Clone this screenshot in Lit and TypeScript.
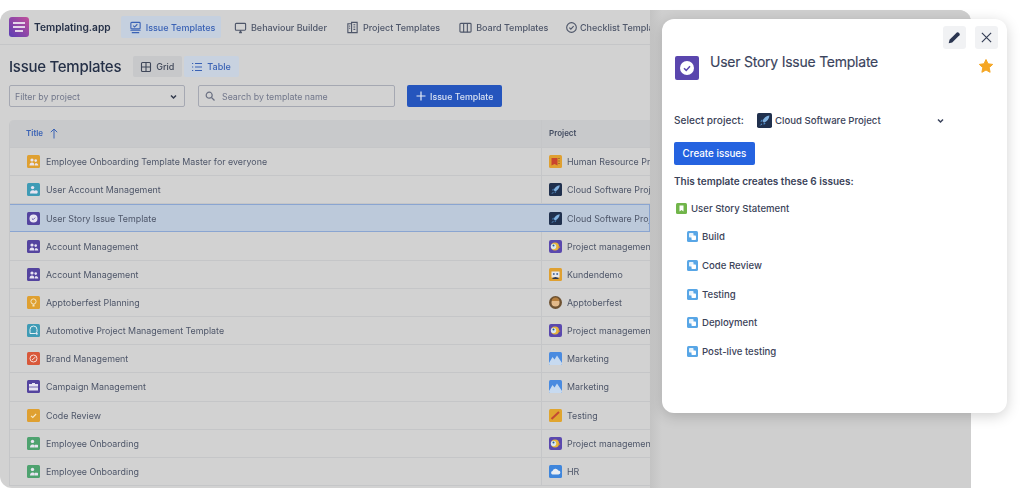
import { LitElement, html, css, svg } from "lit";
import { customElement } from "lit/decorators.js";

const tIcon = (kind: string) => {
  const colors: Record<string, string> = {
    orange: "#dfa031", teal: "#3f9bb5", purple: "#54449f", red: "#d8583a", green: "#4ea26f",
  };
  const map: Record<string, [string, any]> = {
    people: ["orange", svg`<circle cx="5" cy="5" r="1.6"/><circle cx="8.7" cy="5.6" r="1.3"/><path d="M2.5 10.5c0-2 1-3 2.5-3s2.5 1 2.5 3zM8 10.5c0-1.500 0-2 .7-2.600 1.300 0 2.600.8 2.600 2.600z"/>`],
    peopleTeal: ["teal", svg`<circle cx="5.600" cy="4.600" r="1.700"/><path d="M3 10.500c0-2 1-3.200 2.600-3.200S8 8 8 8.500V10.500z"/><circle cx="9" cy="9" r="1.800"/>`],
    story: ["purple", svg`<circle cx="6.500" cy="6.500" r="4"/><path d="M4.900 6.500l1.200 1.200 2-2" fill="none" stroke="#54449f" stroke-width=".9"/>`],
    peoplePurple: ["purple", svg`<circle cx="5" cy="5" r="1.600"/><circle cx="8.700" cy="5.600" r="1.300"/><path d="M2.500 10.500c0-2 1-3 2.500-3s2.500 1 2.500 3zM8 10.500c0-1.500 0-2 .7-2.600 1.300 0 2.600.8 2.600 2.600z"/>`],
    bulb: ["orange", svg`<circle cx="6.500" cy="5.500" r="2.600" fill="none" stroke="#f4e6c4" stroke-width="1"/><path d="M5.500 8.500h2v2h-2z" fill="#f4e6c4"/>`],
    chat: ["teal", svg`<path d="M3 9.500V5.500a3.500 3.500 0 0 1 7 0v2a2 2 0 0 1-2 2z" fill="none" stroke="#e4f0f4" stroke-width="1"/><circle cx="9.800" cy="9.800" r="1"/>`],
    target: ["red", svg`<circle cx="6.500" cy="6.500" r="3.500" fill="none" stroke="#f7dfd8" stroke-width="1"/><path d="M5 8l3.500-3" stroke="#f7dfd8" stroke-width="1"/>`],
    case: ["purple", svg`<path d="M5 4V3h3v1h3v6.500H2V4z"/><path d="M2 7h9" stroke="#54449f" stroke-width=".8"/>`],
    tick: ["orange", svg`<path d="M4 6.800l1.800 1.700 3.300-3.500" fill="none" stroke="#f7e8c6" stroke-width="1.100"/>`],
    board: ["green", svg`<circle cx="5.500" cy="4.400" r="1.700"/><path d="M3 10.500c0-2 1-3 2.500-3 1 0 1.500.3 2 1v2z"/><rect x="7.500" y="7.800" width="3.500" height="2.700" rx=".6"/>`],
  };
  const [c, body] = map[kind];
  return html`<svg class="ti" viewBox="0 0 13 13" fill="#e8e4f2"><rect width="13" height="13" rx="1.500" fill=${colors[c]}/>${body}</svg>`;
};

const pIcon = (kind: string) => {
  const map: Record<string, any> = {
    book: svg`<rect width="13" height="13" rx="1.500" fill="#dfa031"/><path d="M2.500 3h6v7.500l-3-1.500-3 1.500z" fill="#c9452f"/><path d="M9.500 3.500h1M9.500 6h1M9.500 8.500h1" stroke="#7a4a25" stroke-width="1"/>`,
    rocket: svg`<rect width="13" height="13" rx="1.500" fill="#20304d"/><path d="M10.800 2.200C8 2.500 5.800 4.300 4.700 7l1.400 1.400c2.600-1 4.400-3.200 4.700-6.200z" fill="#7fb0de"/><path d="M4.500 5.500L2.800 7.300l1.700.2zM7.600 8.600L5.900 10.300 5.700 8.700z" fill="#4d8cc9"/><path d="M4.300 8.800L2.200 11l2.300-1z" fill="#5d9ad4"/>`,
    bird: svg`<rect width="13" height="13" rx="2" fill="#5a48ae"/><circle cx="6" cy="6.500" r="4" fill="#e7b53c"/><circle cx="4.500" cy="6.500" r="2.700" fill="#d9e6ef"/><circle cx="4.500" cy="5.500" r="1" fill="#2b5d8a"/><path d="M9.500 6l2 1-2 1.500z" fill="#d98a2b"/>`,
    cat: svg`<rect width="13" height="13" rx="1.500" fill="#dfa031"/><rect x="2.500" y="3.500" width="8" height="6" fill="#e6e8ee"/><circle cx="4.800" cy="6" r="1" fill="#4a6a9a"/><circle cx="8.200" cy="6" r="1" fill="#4a6a9a"/><path d="M3.500 10l3-1 3 1v1h-6z" fill="#2c3a57"/>`,
    face: svg`<circle cx="6.500" cy="6.500" r="6.500" fill="#6e5232"/><circle cx="6.500" cy="6.500" r="4" fill="#e2b98a"/><path d="M3 5a3.500 3.500 0 0 1 7 0z" fill="#b67f3e"/>`,
    mountain: svg`<rect width="13" height="13" rx="1.500" fill="#4a8be0"/><path d="M0 11l3.500-6 2 2.500L8 3.500 13 11v.5a1.500 1.500 0 0 1-1.500 1.500h-10A1.500 1.500 0 0 1 0 11.500z" fill="#c7daf0"/>`,
    saw: svg`<rect width="13" height="13" rx="1.500" fill="#e0a52f"/><path d="M2.500 10L10 3" stroke="#c44a34" stroke-width="2"/>`,
    cloud: svg`<rect width="13" height="13" rx="1.500" fill="#3f86dc"/><path d="M3.500 9.500a1.800 1.800 0 0 1 0-3.500 3 3 0 0 1 5.700-.5 2 2 0 0 1 .3 4z" fill="#e9eef4"/>`,
  };
  return html`<svg class="ti" viewBox="0 0 13 13">${map[kind]}</svg>`;
};

const rows: [string, string, string, string][] = [
  ["people", "Employee Onboarding Template Master for everyone", "book", "Human Resource Project"],
  ["peopleTeal", "User Account Management", "rocket", "Cloud Software Project"],
  ["story", "User Story Issue Template", "rocket", "Cloud Software Project"],
  ["peoplePurple", "Account Management", "bird", "Project management"],
  ["peoplePurple", "Account Management", "cat", "Kundendemo"],
  ["bulb", "Apptoberfest Planning", "face", "Apptoberfest"],
  ["chat", "Automotive Project Management Template", "bird", "Project management"],
  ["target", "Brand Management", "mountain", "Marketing"],
  ["case", "Campaign Management", "mountain", "Marketing"],
  ["tick", "Code Review", "saw", "Testing"],
  ["board", "Employee Onboarding", "bird", "Project management"],
  ["board", "Employee Onboarding", "cloud", "HR"],
];

const subtasks = ["Build", "Code Review", "Testing", "Deployment", "Post-live testing"];

const subIcon = html`<svg class="iss" viewBox="0 0 11 11"><rect width="11" height="11" rx="1.500" fill="#58a6e6"/><rect x="2" y="2" width="4.500" height="4.500" rx=".8" fill="#e8f3fc"/><rect x="4.500" y="4.500" width="4.500" height="4.500" rx=".8" fill="#fff"/></svg>`;

@customElement("app-root")
export class AppRoot extends LitElement {
  static styles = css`
    :host { display: block; width: 1024px; height: 488px; overflow: hidden; background: #fff; position: relative;
      font-family: Inter, "Liberation Sans", sans-serif; }
    .window { position: absolute; top: 10px; left: 0; width: 971px; height: 478px; background: #d2d2d2;
      border-radius: 12px 12px 0 12px; overflow: hidden; display: flex; }
    .main { width: 650px; flex: none; overflow: hidden; filter: blur(.4px); }
    .rest { flex: 1; background: linear-gradient(90deg, #c3c3c3, #cccccc 9px, #cfcfcf 12px); }
    nav { height: 35px; box-sizing: border-box; border-bottom: 1px solid #c5c6c8; display: flex; align-items: center;
      padding: 0 0 0 9px; white-space: nowrap; color: #4e5669; font-size: 9px; font-weight: 500; }
    .logo { width: 20px; height: 20px; flex: none; }
    .brand { font-size: 10.200px; font-weight: 600; color: #253047; margin-left: 5px; margin-right: 10px; }
    .tab { display: flex; align-items: center; gap: 4px; height: 22px; padding: 0 9.500px; border-radius: 2px; flex: none; }
    .tab svg { width: 13px; height: 13px; flex: none; fill: none; stroke: currentColor; stroke-width: 1.200; }
    .tab.on { background: #c5d0df; color: #3a62b5; margin-right: 3px; padding: 0 6px 0 8px; }
    .tab.last { padding-left: 7px; padding-right: 0; gap: 2px; }
    .headline { display: flex; align-items: center; height: 21px; margin: 11px 0 0 9px; }
    h1 { margin: 0 12px 0 0; font-size: 15px; letter-spacing: -.27px; line-height: 21px; font-weight: 500; color: #253047; white-space: nowrap; }
    .seg { display: flex; align-items: center; gap: 4px; height: 21px; padding: 0 8px 0 7px; border-radius: 2px; font-size: 9px;
      font-weight: 500; background: #c7c8ca; color: #3f4759; margin-right: 2px; }
    .seg svg { width: 12px; height: 12px; fill: none; stroke: currentColor; stroke-width: 1.100; }
    .seg.on { background: #c8d2e0; color: #3a62b5; }
    .filters { display: flex; align-items: center; height: 22px; margin: 8px 0 0 9px; font-size: 8.800px; color: #70768a; font-weight: 400; }
    .input { height: 22px; box-sizing: border-box; border: 1px solid #a5a8b2; border-radius: 2px; display: flex; align-items: center; padding: 0 6px 0 5px; }
    .sel { width: 176px; justify-content: space-between; margin-right: 13px; }
    .search { width: 197px; margin-right: 12px; gap: 7px; padding-left: 6px; }
    .chev { width: 9px; height: 9px; fill: none; stroke: #333b4e; stroke-width: 1.500; flex: none; }
    .search svg { width: 10px; height: 10px; fill: none; stroke: #6a7082; stroke-width: 1.200; flex: none; }
    .add { height: 22px; width: 95px; box-sizing: border-box; background: #2555bd; color: #d9e2f2; border-radius: 2px; display: flex; align-items: center;
      gap: 4px; padding-left: 9px; font-weight: 500; white-space: nowrap; }
    .add svg { width: 10px; height: 10px; stroke: #e5ebf6; stroke-width: 1.200; fill: none; flex: none; }
    .table { margin: 12.700px 0 0 9px; border-left: 1px solid #c5c6c8; border-top-left-radius: 5px; overflow: hidden; }
    .tr { display: grid; grid-template-columns: 531px 1fr; height: 28.200px; box-sizing: border-box; border-bottom: 1px solid #c5c6c8; font-size: 8.900px; color: #4e5669; }
    .td { display: flex; align-items: center; white-space: nowrap; overflow: hidden; min-width: 0; }
    .td:first-child { padding-left: 17px; gap: 6px; }
    .td + .td { border-left: 1px solid #c5c6c8; padding-left: 7px; gap: 5px; }
    .th { background: #c8c9cb; font-size: 8px; font-weight: 600; color: #414a5f; }
    .th .td:first-child { padding-left: 16px; gap: 6px; color: #3a62b5; }
    .th svg { width: 10px; height: 11px; fill: none; stroke: #3a62b5; stroke-width: 1; }
    .sel-row { background: #bcc9da; border: 1px solid #8aa5d1; margin-left: -1px; }
    .sel-row .td + .td { border-left-color: #bcc9da; }
    .ti { width: 13px; height: 13px; flex: none; }

    .panel { position: absolute; left: 662px; top: 19px; width: 345px; height: 394px; box-sizing: border-box; background: #fff; border-radius: 12px;
      box-shadow: 0 3px 14px rgba(0, 0, 0, .18); padding: 7px 9px 0 12px; color: #3b4359; font-size: 10px; }
    .actions { display: flex; justify-content: flex-end; gap: 9px; height: 23px; }
    .act { width: 23px; height: 23px; background: #f1f2f4; border-radius: 3px; display: flex; align-items: center; justify-content: center; }
    .act svg { width: 15px; height: 15px; }
    .head { display: flex; margin-top: 7px; height: 35px; padding-right: 4px; }
    .big { width: 24px; height: 24px; flex: none; margin: 0 11px 0 1px; }
    .title { flex: 1; font-size: 14px; letter-spacing: -.24px; font-weight: 400; line-height: 20px; color: #3a435c; margin-top: -4px; white-space: nowrap; -webkit-text-stroke: .15px #3a435c; }
    .star { width: 16px; height: 16px; margin-top: 2px; flex: none; }
    .proj { display: flex; align-items: center; height: 16px; margin-top: 21px; font-weight: 500; font-size: 9.600px; white-space: nowrap; }
    .proj .lab { width: 83px; font-size: 10.100px; }
    .proj .ti { width: 15px; height: 15px; margin-right: 3px; }
    .proj .name { width: 161px; }
    .proj .chev { stroke: #3a435c; }
    .create { display: inline-flex; align-items: center; justify-content: center; width: 81px; height: 23px; background: #2563e0; color: #fff; border-radius: 2px; margin-top: 14px;
      font-size: 9.800px; font-weight: 500; box-sizing: border-box; }
    .note { font-weight: 600; font-size: 10px; line-height: 14px; margin-top: 9px; height: 14px; white-space: nowrap; }
    ul { list-style: none; margin: 6px 0 0 2px; padding: 0; display: flex; flex-direction: column; font-weight: 500; font-size: 9.600px; }
    li { height: 28.600px; display: flex; align-items: center; gap: 4px; }
    li.sub { padding-left: 11px; }
    .iss { width: 11px; height: 11px; flex: none; }
  `;

  render() {
    return html`
      <div class="window">
        <div class="main">
          <nav>
            <svg class="logo" viewBox="0 0 20 20">
              <defs><linearGradient id="lg" x1="0" y1="1" x2="1" y2="0"><stop offset="0" stop-color="#5a3db5"/><stop offset="1" stop-color="#c2509a"/></linearGradient></defs>
              <rect width="20" height="20" rx="3" fill="url(#lg)"/>
              <path d="M4 5h12v2H4zM4 9h12v2H4zM6 13h8v2H6z" fill="#e4d6ea"/>
            </svg>
            <span class="brand">Templating.app</span>
            <div class="tab on">
              <svg viewBox="0 0 14 14"><rect x="2" y="1.500" width="10" height="7" rx="1"/><path d="M4.500 5l1.500 1.500 3-3M1.500 10h11M3 12.500h8"/></svg>
              Issue Templates
            </div>
            <div class="tab">
              <svg viewBox="0 0 14 14"><rect x="1.500" y="2.500" width="11" height="7.500" rx="1"/><path d="M7 10v2.500M5.500 12.500h3" stroke-width="1.600"/></svg>
              Behaviour Builder
            </div>
            <div class="tab">
              <svg viewBox="0 0 14 14"><path d="M2 3h4v9.500H2zM6 1.500h6v11H6zM3.500 5.500h1M3.500 8h1M8 4h2M8 6.500h2M8 9h2"/></svg>
              Project Templates
            </div>
            <div class="tab">
              <svg viewBox="0 0 14 14"><rect x="1" y="2.500" width="12" height="9.500" rx="1"/><path d="M5 2.500V12M9 2.500V12"/></svg>
              Board Templates
            </div>
            <div class="tab last">
              <svg viewBox="0 0 14 14"><circle cx="7" cy="7" r="5.200"/><path d="M4.700 7.200l1.600 1.600 3-3.200"/></svg>
              Checklist Templates
            </div>
          </nav>
          <div class="headline">
            <h1>Issue Templates</h1>
            <div class="seg">
              <svg viewBox="0 0 12 12"><rect x="1.500" y="1.500" width="9" height="9" rx="1"/><path d="M6 1.500v9M1.500 6h9"/></svg>
              Grid
            </div>
            <div class="seg on">
              <svg viewBox="0 0 12 12"><path d="M4 2.500h7M4 6h7M4 9.500h7M1 2.500h1.200M1 6h1.200M1 9.500h1.200"/></svg>
              Table
            </div>
          </div>
          <div class="filters">
            <div class="input sel">Filter by project <svg class="chev" viewBox="0 0 9 9"><path d="M2 3.500l2.500 2.500L7 3.500"/></svg></div>
            <div class="input search">
              <svg viewBox="0 0 10 10"><circle cx="4.200" cy="4.200" r="3"/><path d="M6.500 6.500l3 3"/></svg>
              Search by template name
            </div>
            <div class="add"><svg viewBox="0 0 10 10"><path d="M5 .5v9M.5 5h9"/></svg> Issue Template</div>
          </div>
          <div class="table">
            <div class="tr th">
              <div class="td">Title <svg viewBox="0 0 10 11"><path d="M5 10.500V1M1.800 4.200L5 1l3.200 3.200"/></svg></div>
              <div class="td">Project</div>
            </div>
            ${rows.map(
              (r, i) => html`
                <div class="tr ${i === 2 ? "sel-row" : ""}">
                  <div class="td">${tIcon(r[0])}${r[1]}</div>
                  <div class="td">${pIcon(r[2])}${r[3]}</div>
                </div>
              `
            )}
          </div>
        </div>
        <div class="rest"></div>
      </div>
      <aside class="panel">
        <div class="actions">
          <div class="act"><svg viewBox="0 0 13 13"><path d="M1.500 11.500l.7-3L8.500 2.200a1 1 0 0 1 1.400 0l.9.9a1 1 0 0 1 0 1.400L4.500 10.800z" fill="#2a3550"/></svg></div>
          <div class="act"><svg viewBox="0 0 13 13"><path d="M2.500 2.500l8 8M10.500 2.500l-8 8" stroke="#333d55" stroke-width="1" fill="none"/></svg></div>
        </div>
        <div class="head">
          <svg class="big" viewBox="0 0 24 24"><rect width="24" height="24" rx="2" fill="#5a46ae"/><circle cx="12" cy="12" r="7" fill="#fff"/><path d="M9 12.300l2.200 2.100 3.800-4.200" fill="none" stroke="#5a46ae" stroke-width="1.500"/></svg>
          <div class="title">User Story Issue Template</div>
          <svg class="star" viewBox="0 0 16 16"><path d="M8 1.500l2 4.300 4.700.6-3.500 3.200.9 4.700L8 12l-4.100 2.300.9-4.700L1.300 6.400 6 5.800z" fill="#f5a623" stroke="#f5a623" stroke-linejoin="round"/></svg>
        </div>
        <div class="proj">
          <span class="lab">Select project:</span>
          ${pIcon("rocket")}
          <span class="name">Cloud Software Project</span>
          <svg class="chev" viewBox="0 0 9 9"><path d="M2 3.500l2.500 2.500L7 3.500"/></svg>
        </div>
        <div class="create">Create issues</div>
        <div class="note">This template creates these 6 issues:</div>
        <ul>
          <li>
            <svg class="iss" viewBox="0 0 11 11"><rect width="11" height="11" rx="1.500" fill="#71b54a"/><path d="M3.500 2.500h4v6l-2-1.500-2 1.500z" fill="#fff"/></svg>
            User Story Statement
          </li>
          ${subtasks.map((s) => html`<li class="sub">${subIcon}${s}</li>`)}
        </ul>
      </aside>
    `;
  }
}
